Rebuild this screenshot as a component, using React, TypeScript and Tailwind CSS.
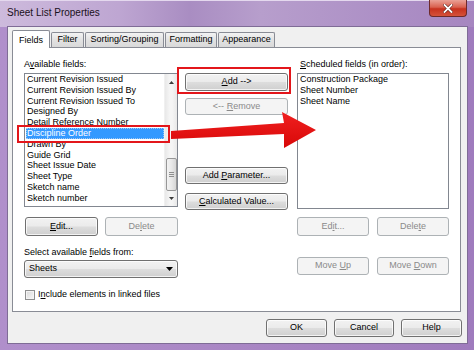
import React from 'react';

const font = "font-['Liberation_Sans',Arial,sans-serif]";

const face =
  'flex items-center rounded-[3px] border border-[#707070] bg-[linear-gradient(#f2f2f2_0%,#ebebeb_48%,#dddddd_52%,#cfcfcf_100%)] text-black shadow-[inset_0_0_0_1px_rgba(255,255,255,0.75)]';
const btn = `${face} justify-center`;
const btnOff =
  'flex items-center justify-center rounded-[3px] border border-[#adb2b5] bg-[#f4f4f4] text-[#8a8a8a]';

const available = [
  'Current Revision Issued',
  'Current Revision Issued By',
  'Current Revision Issued To',
  'Designed By',
  'Detail Reference Number',
  'Discipline Order',
  'Drawn By',
  'Guide Grid',
  'Sheet Issue Date',
  'Sheet Type',
  'Sketch name',
  'Sketch number',
];

const scheduled = ['Construction Package', 'Sheet Number', 'Sheet Name'];

const tabs = [
  { label: 'Fields', w: 'w-[38px]', active: true },
  { label: 'Filter', w: 'w-[33px]' },
  { label: 'Sorting/Grouping', w: 'w-[79px]' },
  { label: 'Formatting', w: 'w-[52px]' },
  { label: 'Appearance', w: 'w-[57px]' },
];

const U = ({ children }: { children: React.ReactNode }) => <span className="underline">{children}</span>;

export default function App() {
  return (
    <div className={`${font} relative w-[474px] h-[350px] overflow-hidden flex flex-col bg-[linear-gradient(to_right,#b08fcb,#a986c4_50%,#9f7bbd)] text-[9px] text-black`}>
      {/* Title bar */}
      <div className="h-[27px] flex items-start justify-between bg-[linear-gradient(to_right,#cdbadc,#bea6d2_25%,#a98dc2_40%,#b79ecc_55%,#ad90c6_80%,#a686c0)] shadow-[inset_0_1px_0_#e4d8ee]">
        <span className="pl-[7px] pt-[7px] text-[10px] leading-[12px] text-[#1a1020]">Sheet List Properties</span>
        <div className="mr-[7px] w-[38px] h-[17px] rounded-b-[4px] border border-t-0 border-[#6e2a2a] bg-[linear-gradient(#eaa196_0%,#d9614f_45%,#c7321f_55%,#d5523b_100%)] flex items-center justify-center">
          <svg width="10" height="9" viewBox="0 0 10 9">
            <path d="M1.5 1 L8.5 8 M8.5 1 L1.5 8" stroke="#5a1a14" strokeWidth="3" strokeLinecap="square" />
            <path d="M1.5 1 L8.5 8 M8.5 1 L1.5 8" stroke="#ffffff" strokeWidth="1.8" strokeLinecap="square" />
          </svg>
        </div>
      </div>

      {/* Frame + client */}
      <div className="flex-1 pl-[8px] pr-[7px] pb-[7px]">
        <div className="h-full bg-[#f0f0f0] shadow-[0_0_0_1px_#7f6c96] flex flex-col">
          {/* Tabs */}
          <div className="h-[20px] pl-[4px] flex items-end relative z-10">
            {tabs.map((t) =>
              t.active ? (
                <div
                  key={t.label}
                  className={`${t.w} h-[18px] -mb-px bg-white border border-b-0 border-[#898c95] rounded-t-[2px] flex items-start justify-center pt-[3px]`}
                >
                  {t.label}
                </div>
              ) : (
                <div
                  key={t.label}
                  className={`${t.w} h-[15px] ml-px bg-[linear-gradient(#f3f3f3,#e2e2e2_50%,#d9d9d9)] border border-b-0 border-[#898c95] rounded-t-[2px] flex items-center justify-center`}
                >
                  {t.label}
                </div>
              )
            )}
          </div>

          {/* Panel */}
          <div className="ml-[4px] w-[449px] h-[265px] bg-white border border-[#898c95] pl-[11px] pt-[9px] flex">
            {/* Left column */}
            <div className="w-[154px] flex flex-col">
              <div className="h-[14px] leading-[14px]">
                A<U>v</U>ailable fields:
              </div>
              <div className="mt-[2px] h-[134px] border border-[#828790] flex overflow-hidden">
                <div className="flex-1 pl-px pt-0 overflow-hidden">
                  {available.map((a) =>
                    a === 'Discipline Order' ? (
                      <div
                        key={a}
                        className="h-[10.8px] leading-[10.8px] pl-px bg-[#3399ff] text-white outline outline-1 outline-dotted outline-[#9cc8f5] -outline-offset-1 whitespace-nowrap"
                      >
                        {a}
                      </div>
                    ) : (
                      <div key={a} className="h-[10.8px] leading-[10.8px] pl-px whitespace-nowrap">
                        {a}
                      </div>
                    )
                  )}
                </div>
                {/* Scrollbar */}
                <div className="w-[13px] bg-[linear-gradient(to_right,#e8e8e8,#f5f5f5_40%,#f5f5f5_60%,#e8e8e8)] border-l border-[#f0f0f0] flex flex-col items-center">
                  <div className="h-[17px] flex items-center justify-center">
                    <svg width="5" height="3" viewBox="0 0 5 3">
                      <path d="M0 3 L2.5 0 L5 3 Z" fill="#3c3c3c" />
                    </svg>
                  </div>
                  <div className="flex-1 w-full" />
                  <div className="w-[11px] h-[33px] rounded-[2px] border border-[#979797] bg-[linear-gradient(to_right,#f3f3f3,#e8e8e8_50%,#d6d6d6)] flex flex-col items-center justify-center gap-[1px]">
                    <div className="w-[5px] h-px bg-[#8e8e8e]" />
                    <div className="w-[5px] h-px bg-[#8e8e8e]" />
                    <div className="w-[5px] h-px bg-[#8e8e8e]" />
                  </div>
                  <div className="h-[15px] flex items-center justify-center">
                    <svg width="5" height="3" viewBox="0 0 5 3">
                      <path d="M0 0 L5 0 L2.5 3 Z" fill="#3c3c3c" />
                    </svg>
                  </div>
                </div>
              </div>
              <div className="mt-[10px] ml-px flex gap-[7px]">
                <div className={`${btn} w-[73px] h-[19px]`}>
                  <span>
                    <U>E</U>dit...
                  </span>
                </div>
                <div className={`${btnOff} w-[73px] h-[19px]`}>
                  <span>
                    De<U>l</U>ete
                  </span>
                </div>
              </div>
              <div className="mt-[9px] h-[14px] leading-[14px]">
                Select available <U>f</U>ields from:
              </div>
              <div className={`${face} justify-between mt-[1px] h-[18px] pl-[4px] pr-[4px]`}>
                <span>Sheets</span>
                <svg width="7" height="4" viewBox="0 0 7 4">
                  <path d="M0 0 L7 0 L3.5 4 Z" fill="#000" />
                </svg>
              </div>
              <div className="mt-[10px] h-[14px] flex items-center gap-[2px] ml-px">
                <div className="w-[10px] h-[10px] border border-[#8e8f8f] bg-[linear-gradient(135deg,#d9d9d9,#f7f7f7)] shadow-[inset_0_0_0_1px_#f4f4f4]" />
                <span className="ml-[1px]">
                  I<U>n</U>clude elements in linked files
                </span>
              </div>
            </div>

            {/* Middle column */}
            <div className="ml-[7px] w-[103px] flex flex-col">
              <div className={`${btn} mt-[16px] h-[18px]`}>
                <span>
                  <U>A</U>dd --&gt;
                </span>
              </div>
              <div className={`${btnOff} mt-[7px] h-[17px]`}>
                <span>
                  &lt;-- <U>R</U>emove
                </span>
              </div>
              <div className={`${btn} mt-[52px] h-[17px]`}>
                <span>
                  Add <U>P</U>arameter...
                </span>
              </div>
              <div className={`${btn} mt-[9px] h-[17px]`}>
                <span>
                  <U>C</U>alculated Value...
                </span>
              </div>
            </div>

            {/* Right column */}
            <div className="ml-[9px] w-[152px] flex flex-col">
              <div className="h-[14px] leading-[14px] pl-[3px]">
                <U>S</U>cheduled fields (in order):
              </div>
              <div className="mt-[2px] h-[136px] border border-[#828790] pl-[2px]">
                {scheduled.map((s) => (
                  <div key={s} className="h-[10.8px] leading-[10.8px] whitespace-nowrap">
                    {s}
                  </div>
                ))}
              </div>
              <div className="mt-[8px] flex gap-[8px]">
                <div className={`${btnOff} w-[72px] h-[19px]`}>
                  <span>
                    Ed<U>i</U>t...
                  </span>
                </div>
                <div className={`${btnOff} w-[72px] h-[19px]`}>
                  <span>
                    Dele<U>t</U>e
                  </span>
                </div>
              </div>
              <div className="mt-[21px] flex gap-[8px]">
                <div className={`${btnOff} w-[72px] h-[18px]`}>
                  <span>
                    Move <U>U</U>p
                  </span>
                </div>
                <div className={`${btnOff} w-[72px] h-[18px]`}>
                  <span>
                    Move <U>D</U>own
                  </span>
                </div>
              </div>
            </div>
          </div>

          {/* Dialog buttons */}
          <div className="mt-[7px] pr-[5px] flex justify-end gap-[7px]">
            <div className={`${btn} w-[61px] h-[18px] border-[#3c7fb1] shadow-[inset_0_0_0_1px_#9fdcf6]`}>OK</div>
            <div className={`${btn} w-[60px] h-[18px]`}>Cancel</div>
            <div className={`${btn} w-[61px] h-[18px]`}>Help</div>
          </div>
        </div>
      </div>

      {/* Annotation overlays */}
      <div className="absolute left-[17px] top-[125px] w-[153px] h-[18px] border-2 border-[#e3161b] pointer-events-none" />
      <div className="absolute left-[177px] top-[67px] w-[114px] h-[27px] border-2 border-[#e3161b] pointer-events-none" />
      <svg className="absolute left-0 top-0 pointer-events-none" width="474" height="350" viewBox="0 0 474 350">
        <defs>
          <linearGradient id="arr" x1="0" y1="0" x2="0" y2="1">
            <stop offset="0" stopColor="#f02020" />
            <stop offset="1" stopColor="#d80808" />
          </linearGradient>
        </defs>
        <polygon
          points="171,131 284,123 282,112 316,130 284,148 284,134 171,139"
          fill="url(#arr)"
        />
      </svg>
    </div>
  );
}
